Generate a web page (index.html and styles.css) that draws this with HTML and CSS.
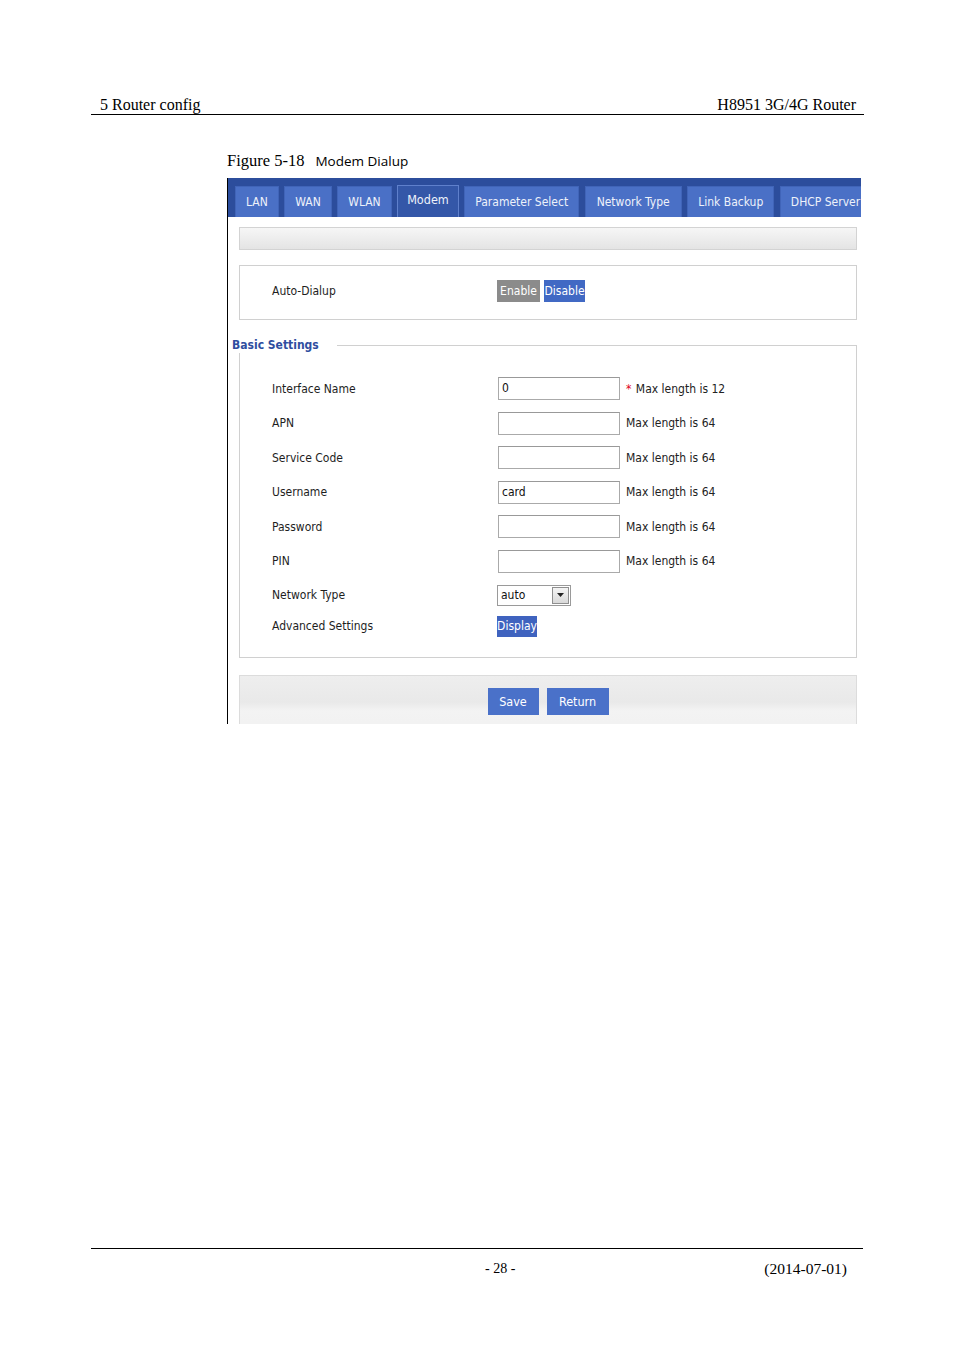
FILE: index.html
```html
<!DOCTYPE html>
<html>
<head>
<meta charset="utf-8">
<title>Modem Dialup</title>
<link rel="stylesheet" href="styles.css">
</head>
<body>
<div class="page">
  <div class="doc-header">
    <span>5 Router config</span>
    <span>H8951 3G/4G Router</span>
  </div>

  <div class="caption"><span class="fig-no">Figure 5-18</span><span class="fig-title">Modem Dialup</span></div>

  <div class="shot">
    <div class="tabbar">
      <div class="tab">LAN</div>
      <div class="tab">WAN</div>
      <div class="tab">WLAN</div>
      <div class="tab active">Modem</div>
      <div class="tab">Parameter Select</div>
      <div class="tab tab-wide">Network Type</div>
      <div class="tab">Link Backup</div>
      <div class="tab">DHCP Server</div>
    </div>

    <div class="content">
      <div class="graybar"></div>

      <div class="autobox">
        <span class="label">Auto-Dialup</span>
        <span class="btn btn-gray">Enable</span>
        <span class="btn btn-blue btn-disable">Disable</span>
      </div>

      <fieldset class="basic">
        <legend>Basic Settings</legend>
        <div class="rows">
          <div class="row">
            <span class="label">Interface Name</span>
            <span class="input">0</span>
            <span class="hint"><span class="req">*</span> Max length is 12</span>
          </div>
          <div class="row">
            <span class="label">APN</span>
            <span class="input"></span>
            <span class="hint">Max length is 64</span>
          </div>
          <div class="row">
            <span class="label">Service Code</span>
            <span class="input"></span>
            <span class="hint">Max length is 64</span>
          </div>
          <div class="row">
            <span class="label">Username</span>
            <span class="input">card</span>
            <span class="hint">Max length is 64</span>
          </div>
          <div class="row">
            <span class="label">Password</span>
            <span class="input"></span>
            <span class="hint">Max length is 64</span>
          </div>
          <div class="row">
            <span class="label">PIN</span>
            <span class="input"></span>
            <span class="hint">Max length is 64</span>
          </div>
          <div class="row row-select">
            <span class="label">Network Type</span>
            <span class="select"><span class="select-val">auto</span><span class="select-arrow"><svg width="7" height="4" viewBox="0 0 7 4"><path d="M0 0H7L3.5 4Z" fill="#222"/></svg></span></span>
          </div>
          <div class="row row-adv">
            <span class="label">Advanced Settings</span>
            <span class="btn btn-blue btn-display">Display</span>
          </div>
        </div>
      </fieldset>

      <div class="actionbar">
        <span class="btn btn-action btn-save">Save</span>
        <span class="btn btn-action btn-return">Return</span>
      </div>
    </div>
  </div>

  <div class="doc-footer">
    <span class="pageno">- 28 -</span>
    <span class="date">(2014-07-01)</span>
  </div>
</div>
</body>
</html>
```

FILE: styles.css
```css
* { box-sizing: border-box; }

html, body {
  margin: 0;
  padding: 0;
  background: #fff;
}

.page {
  width: 954px;
  height: 1350px;
  display: flex;
  flex-direction: column;
  font-family: "Liberation Serif", "Times New Roman", serif;
  color: #000;
}

.doc-header {
  margin: 96px 90px 0 91px;
  padding: 0 8px 0 9px;
  display: flex;
  justify-content: space-between;
  font-size: 16px;
  line-height: 18px;
  border-bottom: 1px solid #000;
}

.caption {
  margin: 37px 0 0 227px;
  font-size: 16.5px;
  line-height: 18px;
  height: 18px;
}
.fig-title {
  font-family: "Open Sans", "Liberation Sans", sans-serif;
  font-size: 13.5px;
  margin-left: 11px;
}

.shot {
  margin: 8px 0 0 227px;
  width: 634px;
  height: 546px;
  flex: none;
  overflow: hidden;
  border-left: 1px solid #000;
  font-family: "DejaVu Sans Condensed", "DejaVu Sans", sans-serif;
  font-size: 12px;
  color: #222;
}

.tabbar {
  height: 39px;
  background: #2c4d9c;
  padding: 8px 0 0 7px;
  display: flex;
  align-items: flex-end;
  gap: 5.5px;
  overflow: hidden;
  white-space: nowrap;
}
.tab {
  flex: none;
  height: 31px;
  line-height: 31px;
  padding: 0 10px;
  background: #4a70c6;
  color: #eef2fa;
  border: 1px solid #4064b8;
  border-bottom: none;
}
.tab-wide {
  padding: 0 11px;
}
.tab.active {
  height: 32px;
  line-height: 28px;
  background: #3457a8;
  border-color: #5f80cc;
  padding: 0 9px;
  font-size: 12.5px;
}

.content {
  padding: 10px 4px 0 11px;
}

.graybar {
  height: 23px;
  border: 1px solid #d3d3d3;
  background: linear-gradient(#f6f6f6, #e4e4e4);
}

.autobox {
  margin-top: 15px;
  height: 55px;
  border: 1px solid #d0d0d0;
  display: flex;
  align-items: center;
  padding: 0 0 4px 32px;
}

.label {
  width: 225px;
  flex: none;
  color: #1e1e1e;
}

.btn {
  display: inline-block;
  color: #fff;
  text-align: center;
  flex: none;
  white-space: nowrap;
}
.btn-gray {
  width: 43px;
  height: 22px;
  line-height: 22px;
  background: #8b8b8b;
}
.btn-blue {
  background: #4169c4;
}
.btn-disable {
  width: 41px;
  height: 22px;
  line-height: 22px;
  margin-left: 4px;
}

.basic {
  margin: 17px 0 0 0;
  padding: 0;
  min-width: 0;
  border: 1px solid #d0d0d0;
}
.basic legend {
  margin-left: -8px;
  padding: 0 18px 0 0;
  font-weight: bold;
  color: #2f4e9f;
  font-size: 12px;
  line-height: 16px;
  background: #fff;
}

.rows {
  padding: 24px 0 20px 32px;
  display: flex;
  flex-direction: column;
  gap: 11.6px;
}
.row {
  display: flex;
  align-items: center;
  height: 23px;
}
.input {
  width: 122px;
  height: 23px;
  border: 1px solid #aaa;
  border-top-color: #999;
  padding: 0 3px;
  line-height: 21px;
  color: #111;
  flex: none;
  margin-left: 1px;
}
.hint {
  margin-left: 6px;
  color: #222;
}
.req {
  color: #e0001b;
  margin-right: 1px;
}

.row-select {
  height: 21px;
}
.select {
  display: flex;
  width: 74px;
  height: 21px;
  border: 1px solid #9a9a9a;
  background: #fff;
}
.select-val {
  flex: 1;
  padding-left: 3px;
  line-height: 19px;
  color: #111;
}
.select-arrow {
  width: 17px;
  margin: 1px;
  border: 1px solid #8f8f8f;
  background: linear-gradient(#f4f4f4, #d9d9d9);
  display: flex;
  align-items: center;
  justify-content: center;
}

.row-adv {
  height: 21px;
  margin-top: -1.6px;
}
.btn-display {
  width: 40px;
  height: 21px;
  line-height: 20px;
  background: #3f63bf;
}

.actionbar {
  margin-top: 17px;
  height: 60px;
  border: 1px solid #dcdcdc;
  background: linear-gradient(#eeeeee, #e9e9e9 45%, #f3f3f3 60%, #f1f1f1);
  display: flex;
  justify-content: center;
  align-items: flex-start;
  gap: 8px;
  padding-top: 12px;
}
.btn-action {
  height: 27px;
  line-height: 27px;
  background: #4a71c9;
  font-size: 12.5px;
}
.btn-save { width: 51px; }
.btn-return { width: 62px; }

.doc-footer {
  margin: auto 91px 0 91px;
  border-top: 1px solid #000;
  display: flex;
  font-size: 14px;
  line-height: 18px;
  padding: 11px 16px 72px 394px;
}
.date {
  margin-left: auto;
  font-size: 15.5px;
}
```
